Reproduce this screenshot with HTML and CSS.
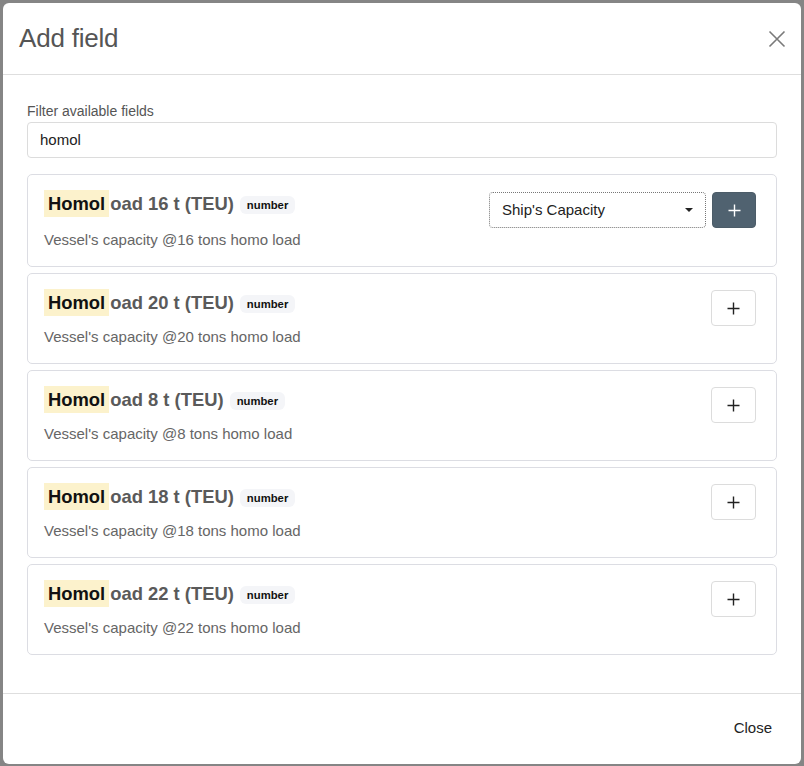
FILE: index.html
```html
<!DOCTYPE html>
<html>
<head>
<meta charset="utf-8">
<link rel="stylesheet" href="styles.css">
</head>
<body>
<div class="modal">
  <div class="modal-header">
    <h1 class="modal-title">Add field</h1>
    <button class="close-x" aria-label="Close">
      <svg width="18" height="18" viewBox="0 0 18 18"><path d="M1.5 1.5 L16.5 16.5 M16.5 1.5 L1.5 16.5" stroke="#7a7a7a" stroke-width="1.6" fill="none"/></svg>
    </button>
  </div>
  <div class="modal-body">
    <label class="filter-label">Filter available fields</label>
    <div class="filter-input">homol</div>
    <div class="field-list">
      <div class="field-card first">
        <div class="field-info">
          <div class="field-title"><mark class="hl">Homol</mark>oad 16 t (TEU)<span class="badge">number</span></div>
          <div class="field-desc">Vessel's capacity @16 tons homo load</div>
        </div>
        <div class="field-actions">
          <div class="select">Ship's Capacity<span class="caret"></span></div>
          <button class="add-btn dark"><svg width="13" height="13" viewBox="0 0 13 13"><path d="M6.5 0.5 V12.5 M0.5 6.5 H12.5" stroke="#fff" stroke-width="1.4"/></svg></button>
        </div>
      </div>
      <div class="field-card">
        <div class="field-info">
          <div class="field-title"><mark class="hl">Homol</mark>oad 20 t (TEU)<span class="badge">number</span></div>
          <div class="field-desc">Vessel's capacity @20 tons homo load</div>
        </div>
        <div class="field-actions"><button class="add-btn"><svg width="13" height="13" viewBox="0 0 13 13"><path d="M6.5 0.5 V12.5 M0.5 6.5 H12.5" stroke="#222" stroke-width="1.4"/></svg></button></div>
      </div>
      <div class="field-card">
        <div class="field-info">
          <div class="field-title"><mark class="hl">Homol</mark>oad 8 t (TEU)<span class="badge">number</span></div>
          <div class="field-desc">Vessel's capacity @8 tons homo load</div>
        </div>
        <div class="field-actions"><button class="add-btn"><svg width="13" height="13" viewBox="0 0 13 13"><path d="M6.5 0.5 V12.5 M0.5 6.5 H12.5" stroke="#222" stroke-width="1.4"/></svg></button></div>
      </div>
      <div class="field-card">
        <div class="field-info">
          <div class="field-title"><mark class="hl">Homol</mark>oad 18 t (TEU)<span class="badge">number</span></div>
          <div class="field-desc">Vessel's capacity @18 tons homo load</div>
        </div>
        <div class="field-actions"><button class="add-btn"><svg width="13" height="13" viewBox="0 0 13 13"><path d="M6.5 0.5 V12.5 M0.5 6.5 H12.5" stroke="#222" stroke-width="1.4"/></svg></button></div>
      </div>
      <div class="field-card">
        <div class="field-info">
          <div class="field-title"><mark class="hl">Homol</mark>oad 22 t (TEU)<span class="badge">number</span></div>
          <div class="field-desc">Vessel's capacity @22 tons homo load</div>
        </div>
        <div class="field-actions"><button class="add-btn"><svg width="13" height="13" viewBox="0 0 13 13"><path d="M6.5 0.5 V12.5 M0.5 6.5 H12.5" stroke="#222" stroke-width="1.4"/></svg></button></div>
      </div>
    </div>
  </div>
  <div class="modal-footer">
    <button class="close-btn">Close</button>
  </div>
</div>
</body>
</html>
```
FILE: styles.css
```css
* { box-sizing: border-box; }
html, body { margin: 0; height: 100%; }
body {
  background: #858585;
  padding: 3px 3px 2px 3px;
  font-family: "Liberation Sans", Arial, sans-serif;
  color: #222;
}
.modal {
  background: #fff;
  border-radius: 6px;
  height: 761px;
  display: flex;
  flex-direction: column;
}
.modal-header {
  height: 72px;
  border-bottom: 1px solid #dedede;
  display: flex;
  align-items: center;
  justify-content: space-between;
  padding: 0 15px 0 16px;
}
.modal-title {
  margin: 0;
  font-size: 26px;
  font-weight: normal;
  color: #555;
  letter-spacing: -0.2px;
}
.close-x {
  border: 0;
  background: none;
  padding: 0;
  width: 18px;
  height: 18px;
  display: flex;
}
.modal-body {
  flex: 1;
  padding: 28px 24px 0 24px;
}
.filter-label {
  display: block;
  font-size: 14px;
  color: #555;
  line-height: 16px;
  margin-bottom: 3px;
}
.filter-input {
  height: 36px;
  border: 1px solid #dcdcdc;
  border-radius: 4px;
  padding: 0 12px;
  font-size: 15px;
  line-height: 34px;
  color: #222;
}
.field-list {
  margin-top: 16px;
  display: flex;
  flex-direction: column;
  gap: 6px;
}
.field-card {
  border: 1px solid #dcdde3;
  border-radius: 5px;
  padding: 16px 20px 16px 16px;
  display: flex;
  justify-content: space-between;
  align-items: flex-start;
  height: 91px;
}
.field-card.first { height: 93px; padding-top: 17px; }
.field-title {
  font-size: 18.4px;
  font-weight: bold;
  color: #5a5a5a;
  line-height: 27px;
  display: flex;
  align-items: center;
  margin-top: -1px;
}
.first .field-title { margin-top: -2px; }
.hl {
  background: #fcf2cc;
  color: #111;
  padding: 0 4px;
  margin-right: 1px;
  line-height: 27px;
}
.badge {
  font-size: 11.3px;
  font-weight: bold;
  color: #111;
  background: #f4f5f8;
  border-radius: 6px;
  padding: 0 7px;
  line-height: 18px;
  margin-left: 6px;
  margin-top: 2px;
}
.field-desc {
  margin-top: 11px;
  font-size: 15px;
  color: #666;
  line-height: 20px;
}
.first .field-desc { margin-top: 13px; }
.field-actions {
  display: flex;
  gap: 6px;
}
.select {
  width: 217px;
  height: 36px;
  border: 1px dotted #777;
  border-radius: 4px;
  padding: 0 12px;
  font-size: 15px;
  line-height: 34px;
  color: #222;
  display: flex;
  justify-content: space-between;
  align-items: center;
}
.caret {
  width: 0;
  height: 0;
  border-left: 4px solid transparent;
  border-right: 4px solid transparent;
  border-top: 4px solid #222;
}
.add-btn {
  width: 45px;
  height: 36px;
  border: 1px solid #dcdcdc;
  border-radius: 4px;
  background: #fff;
  padding: 0;
  display: flex;
  align-items: center;
  justify-content: center;
}
.add-btn.dark {
  background: #506270;
  border-color: #4c5c68;
  width: 44px;
}
.modal-footer {
  height: 71px;
  border-top: 1px solid #dedede;
  display: flex;
  align-items: center;
  justify-content: flex-end;
  padding: 0 17px 4px 17px;
}
.close-btn {
  border: 0;
  background: none;
  font-family: "Liberation Sans", Arial, sans-serif;
  font-size: 15px;
  color: #222;
  padding: 6px 12px;
}
```
